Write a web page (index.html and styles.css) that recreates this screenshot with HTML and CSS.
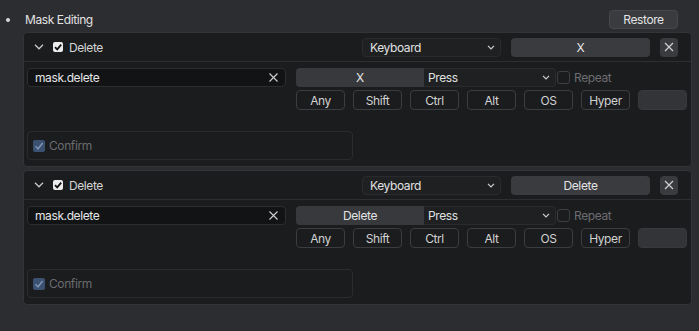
FILE: index.html
```html
<!DOCTYPE html>
<html lang="en">
<head>
    <meta charset="UTF-8">
    <title>Keymap - Mask Editing</title>
    <link rel="stylesheet" href="styles.css">
</head>
<body>
    <div class="group-title">
        <span class="bullet"></span>
        <span class="title">Mask Editing</span>
        <button class="btn restore">Restore</button>
    </div>

    <div class="items">
        <!-- item 1 -->
        <section class="item">
            <div class="item-head">
                <svg class="chevron" width="10" height="6" viewBox="0 0 10 6"><path d="M1 0.8 L5 4.8 L9 0.8" fill="none" stroke="#c9c9c9" stroke-width="1.3"/></svg>
                <span class="check-on"><svg width="10" height="10" viewBox="0 0 10 10"><path d="M2 5.2 L4.2 7.4 L8.2 2.6" fill="none" stroke="#111" stroke-width="1.8"/></svg></span>
                <span class="item-name">Delete</span>
                <div class="dropdown head-drop">Keyboard<svg class="caret" width="8" height="5" viewBox="0 0 8 5"><path d="M1 0.8 L4 3.8 L7 0.8" fill="none" stroke="#cfcfcf" stroke-width="1.2"/></svg></div>
                <div class="btn key-btn">X</div>
                <div class="btn close-btn"><svg width="10" height="10" viewBox="0 0 10 10"><path d="M1 1 L9 9 M9 1 L1 9" stroke="#d0d0d0" stroke-width="1.2"/></svg></div>
            </div>
            <div class="item-body">
                <div class="body-top">
                    <div class="text-field">mask.delete<svg class="clear" width="9" height="9" viewBox="0 0 9 9"><path d="M0.5 0.5 L8.5 8.5 M8.5 0.5 L0.5 8.5" stroke="#cfcfcf" stroke-width="1.1"/></svg></div>
                    <div class="right-col">
                        <div class="key-row">
                            <div class="key-field">X</div>
                            <div class="dropdown press-drop">Press<svg class="caret" width="8" height="5" viewBox="0 0 8 5"><path d="M1 0.8 L4 3.8 L7 0.8" fill="none" stroke="#cfcfcf" stroke-width="1.2"/></svg></div>
                            <span class="check-off"></span>
                            <span class="repeat">Repeat</span>
                        </div>
                        <div class="mod-row">
                            <div class="mod">Any</div>
                            <div class="mod">Shift</div>
                            <div class="mod">Ctrl</div>
                            <div class="mod">Alt</div>
                            <div class="mod">OS</div>
                            <div class="mod">Hyper</div>
                            <div class="mod blank"></div>
                        </div>
                    </div>
                </div>
                <div class="props">
                    <span class="check-dim"><svg width="12" height="12" viewBox="0 0 12 12"><path d="M2.5 6.3 L5 8.8 L9.6 3" fill="none" stroke="#7f93b3" stroke-width="1.5"/></svg></span>
                    <span class="prop-label">Confirm</span>
                </div>
            </div>
        </section>

        <!-- item 2 -->
        <section class="item">
            <div class="item-head">
                <svg class="chevron" width="10" height="6" viewBox="0 0 10 6"><path d="M1 0.8 L5 4.8 L9 0.8" fill="none" stroke="#c9c9c9" stroke-width="1.3"/></svg>
                <span class="check-on"><svg width="10" height="10" viewBox="0 0 10 10"><path d="M2 5.2 L4.2 7.4 L8.2 2.6" fill="none" stroke="#111" stroke-width="1.8"/></svg></span>
                <span class="item-name">Delete</span>
                <div class="dropdown head-drop">Keyboard<svg class="caret" width="8" height="5" viewBox="0 0 8 5"><path d="M1 0.8 L4 3.8 L7 0.8" fill="none" stroke="#cfcfcf" stroke-width="1.2"/></svg></div>
                <div class="btn key-btn">Delete</div>
                <div class="btn close-btn"><svg width="10" height="10" viewBox="0 0 10 10"><path d="M1 1 L9 9 M9 1 L1 9" stroke="#d0d0d0" stroke-width="1.2"/></svg></div>
            </div>
            <div class="item-body">
                <div class="body-top">
                    <div class="text-field">mask.delete<svg class="clear" width="9" height="9" viewBox="0 0 9 9"><path d="M0.5 0.5 L8.5 8.5 M8.5 0.5 L0.5 8.5" stroke="#cfcfcf" stroke-width="1.1"/></svg></div>
                    <div class="right-col">
                        <div class="key-row">
                            <div class="key-field">Delete</div>
                            <div class="dropdown press-drop">Press<svg class="caret" width="8" height="5" viewBox="0 0 8 5"><path d="M1 0.8 L4 3.8 L7 0.8" fill="none" stroke="#cfcfcf" stroke-width="1.2"/></svg></div>
                            <span class="check-off"></span>
                            <span class="repeat">Repeat</span>
                        </div>
                        <div class="mod-row">
                            <div class="mod">Any</div>
                            <div class="mod">Shift</div>
                            <div class="mod">Ctrl</div>
                            <div class="mod">Alt</div>
                            <div class="mod">OS</div>
                            <div class="mod">Hyper</div>
                            <div class="mod blank"></div>
                        </div>
                    </div>
                </div>
                <div class="props">
                    <span class="check-dim"><svg width="12" height="12" viewBox="0 0 12 12"><path d="M2.5 6.3 L5 8.8 L9.6 3" fill="none" stroke="#7f93b3" stroke-width="1.5"/></svg></span>
                    <span class="prop-label">Confirm</span>
                </div>
            </div>
        </section>
    </div>
</body>
</html>
```

FILE: styles.css
```css
/* Reset & global */
* {
    margin: 0;
    padding: 0;
    box-sizing: border-box;
}

body {
    font-family: 'Inter', 'DejaVu Sans', sans-serif;
    font-size: 12px;
    letter-spacing: -0.4px;
    background-color: #2c2d31;
    color: #dcdcdc;
    width: 699px;
    height: 331px;
    overflow: hidden;
}

/* Group title row */
.group-title {
    display: flex;
    align-items: center;
    height: 19px;
    margin-top: 10px;
    padding-right: 21px;
}

.bullet {
    width: 4px;
    height: 4px;
    border-radius: 50%;
    background-color: #d8d8d8;
    margin-left: 6px;
    margin-right: 15px;
}

.title {
    flex: 1;
    color: #e2e2e2;
}

.btn {
    display: flex;
    align-items: center;
    justify-content: center;
    background-color: #3a3b3f;
    border: none;
    border-radius: 4px;
    color: #e4e4e4;
    font-family: inherit;
    font-size: 12px;
    letter-spacing: -0.4px;
}

.restore {
    width: 69px;
    height: 19px;
    border: 1px solid #46474b;
}

/* Keymap items */
.items {
    display: flex;
    flex-direction: column;
    gap: 3px;
    margin: 3px 7px 0 23px;
}

.item {
    background-color: #1b1c1e;
    border: 1px solid #333438;
    border-radius: 4px;
    height: 135px;
}

.item-head {
    display: flex;
    align-items: center;
    height: 29px;
    border-bottom: 1px solid #2e2f33;
    padding: 0 13px 0 10px;
}

.chevron {
    margin-right: 9px;
}

.check-on {
    display: flex;
    width: 10px;
    height: 10px;
    background-color: #ececec;
    border-radius: 2px;
    margin-right: 6px;
}

.item-name {
    flex: 1;
    color: #d4d4d4;
}

.dropdown {
    display: flex;
    align-items: center;
    justify-content: space-between;
    height: 19px;
    background-color: #1f2022;
    border: 1px solid #2a2b2e;
    border-radius: 4px;
    padding: 0 5px 0 7px;
    color: #e0e0e0;
}

.head-drop {
    width: 139px;
    margin-right: 10px;
}

.key-btn {
    width: 139px;
    height: 19px;
    margin-right: 10px;
}

.close-btn {
    width: 18px;
    height: 19px;
}

/* Body */
.item-body {
    padding: 6px 4px 0 3px;
}

.body-top {
    display: flex;
    gap: 10px;
}

.text-field {
    display: flex;
    align-items: center;
    justify-content: space-between;
    width: 260px;
    height: 19px;
    background-color: #121315;
    border: 1px solid #2c2d30;
    border-radius: 4px;
    padding: 0 7px 0 7px;
    color: #e6e6e6;
}

.right-col {
    display: flex;
    flex-direction: column;
    gap: 3px;
}

.key-row {
    display: flex;
    align-items: center;
    height: 19px;
}

.key-field {
    display: flex;
    align-items: center;
    justify-content: center;
    width: 128px;
    height: 19px;
    background-color: #38393c;
    border-radius: 4px 0 0 4px;
    color: #e4e4e4;
}

.press-drop {
    width: 132px;
    border-radius: 0 4px 4px 0;
    border-left: none;
    padding-left: 4px;
}

.check-off {
    width: 13px;
    height: 13px;
    border: 1px solid #3e3f42;
    border-radius: 3px;
    margin: 0 4px 0 1px;
}

.repeat {
    color: #6c6d70;
}

.mod-row {
    display: flex;
    gap: 8px;
}

.mod {
    display: flex;
    align-items: center;
    justify-content: center;
    width: 49px;
    height: 20px;
    border: 1px solid #3c3d40;
    border-radius: 4px;
    color: #d2d2d2;
}

.mod.blank {
    background-color: #333437;
    border-color: #38393c;
}

/* Operator properties */
.props {
    display: flex;
    align-items: center;
    width: 326px;
    height: 29px;
    margin-top: 21px;
    border: 1px solid #2b2c2f;
    border-radius: 4px;
    padding-left: 5px;
}

.check-dim {
    display: flex;
    width: 12px;
    height: 12px;
    background-color: #3b5172;
    border-radius: 2px;
    margin-right: 4px;
}

.prop-label {
    color: #6a6b6e;
}
```
